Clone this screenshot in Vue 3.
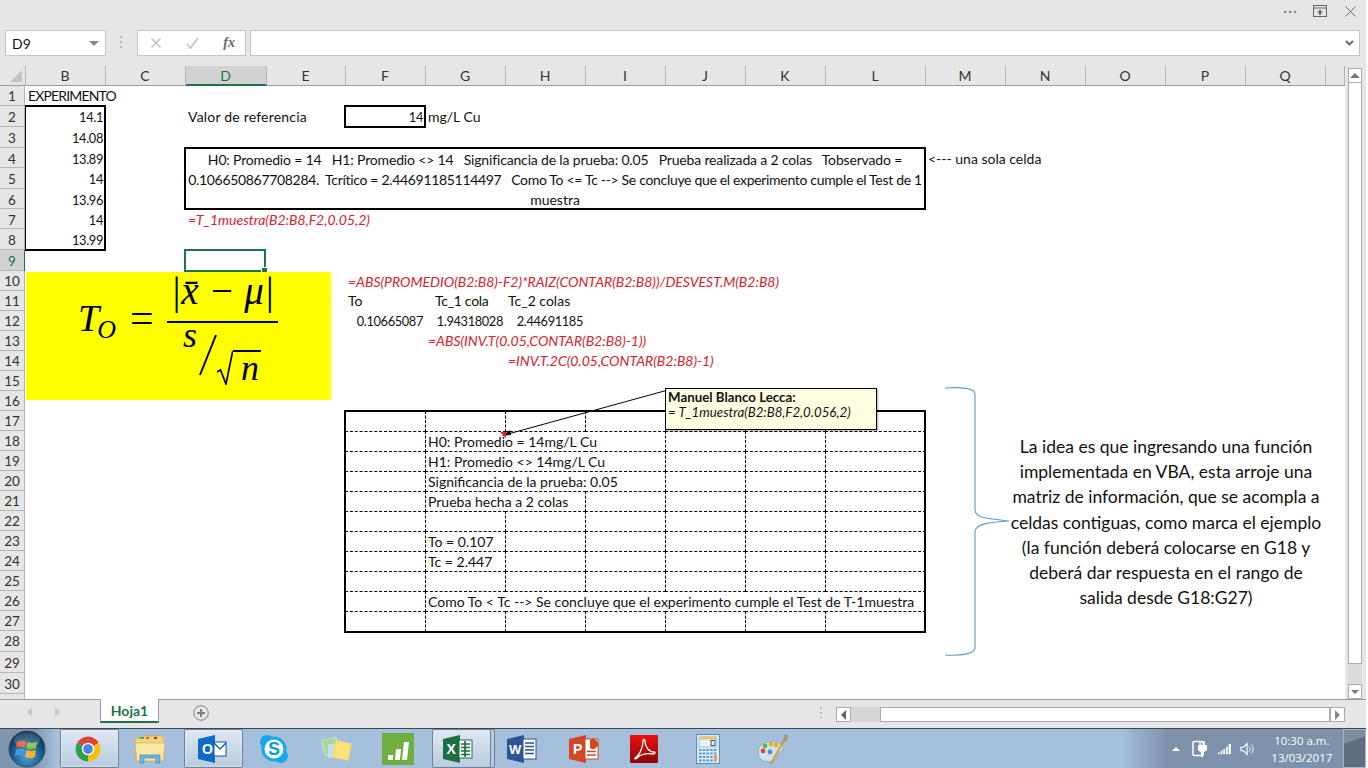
<script setup>
import { computed } from 'vue';

const colNames = 'BCDEFGHIJKLMNOPQR'.split('');
const colWidths = [80, 80, 81, 79, 80, 80, 80, 80, 80, 80, 100, 80, 80, 80, 80, 80, 20];
const rowHeights = [20, 21, 21, 20, 21, 20, 20, 21, 21, 20, 20, 20, 20, 20, 20, 20, 20, 20, 20, 20, 20, 20, 20, 20, 20, 20, 20, 21, 21, 21];

const gridCols = colWidths.map((w) => w + 'px').join(' ');
const gridRows = rowHeights.map((h) => h + 'px').join(' ');

// "B2" -> grid position, "B2:B8" -> grid area
const place = (ref) => {
    const [a, b] = ref.split(':');
    const c1 = colNames.indexOf(a[0]) + 1;
    const r1 = Number(a.slice(1));
    if (!b) return { gridColumn: c1, gridRow: r1 };
    const c2 = colNames.indexOf(b[0]) + 2;
    const r2 = Number(b.slice(1)) + 1;
    return { gridColumn: `${c1} / ${c2}`, gridRow: `${r1} / ${r2}` };
};

const rowOf = (ref) => Number(ref.slice(1));

const cells = [
    { at: 'B1', text: 'EXPERIMENTO', ls: -0.85 },
    { at: 'B2', text: '14.1', cls: 'num' },
    { at: 'B3', text: '14.08', cls: 'num' },
    { at: 'B4', text: '13.89', cls: 'num' },
    { at: 'B5', text: '14', cls: 'num' },
    { at: 'B6', text: '13.96', cls: 'num' },
    { at: 'B7', text: '14', cls: 'num' },
    { at: 'B8', text: '13.99', cls: 'num' },
    { at: 'D2', text: 'Valor de referencia', ls: 0.2 },
    { at: 'F2', text: '14', cls: 'num' },
    { at: 'G2', text: 'mg/L Cu' },
    { at: 'M4', text: '<--- una sola celda' },
    { at: 'D7', text: '=T_1muestra(B2:B8,F2,0.05,2)', cls: 'red' },
    { at: 'F10', text: '=ABS(PROMEDIO(B2:B8)-F2)*RAIZ(CONTAR(B2:B8))/DESVEST.M(B2:B8)', cls: 'red' },
    { at: 'F11', text: 'To' },
    { at: 'G11', text: 'Tc_1 cola', cls: 'indent', ls: -0.3 },
    { at: 'H11', text: 'Tc_2 colas' },
    { at: 'F12', text: '0.10665087', cls: 'num' },
    { at: 'G12', text: '1.94318028', cls: 'num' },
    { at: 'H12', text: '2.44691185', cls: 'num' },
    { at: 'G13', text: '=ABS(INV.T(0.05,CONTAR(B2:B8)-1))', cls: 'red' },
    { at: 'H14', text: '=INV.T.2C(0.05,CONTAR(B2:B8)-1)', cls: 'red' },
];

const tableText = {
    G18: 'H0: Promedio = 14mg/L Cu',
    G19: 'H1: Promedio <> 14mg/L Cu',
    G20: 'Significancia de la prueba: 0.05',
    G21: 'Prueba hecha a 2 colas',
    G23: 'To = 0.107',
    G24: 'Tc = 2.447',
    G26: 'Como To < Tc --> Se concluye que el experimento cumple el Test de T-1muestra',
};

// cells whose right dashed line is hidden because the text runs over it
const noRight = {
    18: 'GH',
    19: 'GH',
    20: 'GH',
    21: 'G',
    26: 'GHIJK',
};

const tableCells = computed(() => {
    const list = [];
    for (let r = 17; r <= 27; r++) {
        for (const c of 'FGHIJKL') {
            const hideRight = (noRight[r] || '').includes(c) || c === 'L';
            list.push({ at: c + r, text: tableText[c + r] || '', hideRight, hideBottom: r === 27 });
        }
    }
    return list;
});

const colHeaders = colNames.map((n, i) => ({ n: n === 'R' ? '' : n, w: colWidths[i] }));
const rowHeaders = rowHeights.map((h, i) => ({ n: i + 1, h, low: (i >= 1 && i <= 8) || i >= 28 }));

const mergedLines = [
    { text: 'H0: Promedio = 14   H1: Promedio <> 14   Significancia de la prueba: 0.05   Prueba realizada a 2 colas   Tobservado =', ls: -0.165 },
    { text: '0.106650867708284.  Tcrítico = 2.44691185114497   Como To <= Tc --> Se concluye que el experimento cumple el Test de 1', ls: -0.32 },
    { text: 'muestra', ls: 0 },
];

const noteLines = [
    'La idea es que ingresando una función',
    'implementada en VBA, esta arroje una',
    'matriz de información, que se acompla a',
    'celdas contiguas, como marca el ejemplo',
    '(la función deberá colocarse en G18 y',
    'deberá dar respuesta en el rango de',
    'salida desde G18:G27)',
];
</script>

<template>
    <div class="app">

        <div class="title-bar">
            <span class="dots">···</span>
            <svg class="ribbon-ico" width="14" height="12" viewBox="0 0 14 12">
                <rect x="0.5" y="0.5" width="13" height="11" fill="none" stroke="#666" />
                <line x1="0" y1="3" x2="14" y2="3" stroke="#666" />
                <path d="M7 4.5 L10 7.5 H8 V10 H6 V7.5 H4 Z" fill="#666" />
            </svg>
            <svg class="close-ico" width="11" height="11" viewBox="0 0 11 11">
                <path d="M0.5 0.5 L10.5 10.5 M10.5 0.5 L0.5 10.5" stroke="#666" fill="none" />
            </svg>
        </div>

        <div class="formula-bar">
            <div class="name-box">
                <span>D9</span>
                <i class="tri-down"></i>
            </div>
            <div class="grip"></div>
            <div class="fx-box">
                <svg width="12" height="12" viewBox="0 0 12 12">
                    <path d="M1.5 1.5 L10.5 10.5 M10.5 1.5 L1.5 10.5" stroke="#c4c4c4" stroke-width="1.6" fill="none" />
                </svg>
                <svg width="13" height="12" viewBox="0 0 13 12">
                    <path d="M1 7 L4.5 11 L12 1" stroke="#c4c4c4" stroke-width="1.8" fill="none" />
                </svg>
                <span class="fx">fx</span>
            </div>
            <div class="formula-input">
                <svg width="9" height="6" viewBox="0 0 9 6">
                    <path d="M1 1 L4.5 4.5 L8 1" stroke="#666" stroke-width="1.8" fill="none" />
                </svg>
            </div>
        </div>

        <div class="column-row">
            <div class="corner"><i></i></div>
            <div
                v-for="c in colHeaders"
                :key="c.n"
                class="col-head"
                :class="{ active: c.n === 'D' }"
                :style="{ width: c.w + 'px' }"
            >{{ c.n }}</div>
        </div>

        <div class="work">
            <div class="row-heads">
                <div
                    v-for="r in rowHeaders"
                    :key="r.n"
                    class="row-head"
                    :class="{ active: r.n === 9, low: r.low }"
                    :style="{ height: r.h + 'px' }"
                >{{ r.n }}</div>
            </div>

            <div class="sheet-wrap">
                <div class="sheet" :style="{ gridTemplateColumns: gridCols, gridTemplateRows: gridRows }">
                    <div
                        v-for="t in tableCells"
                        :key="t.at"
                        class="tcell"
                        :class="{ 'no-right': t.hideRight, 'no-bottom': t.hideBottom }"
                        :style="place(t.at)"
                    >{{ t.text }}</div>

                    <div
                        v-for="c in cells"
                        :key="c.at"
                        class="cell"
                        :class="[c.cls, { low: rowOf(c.at) >= 2 && rowOf(c.at) <= 10 }]"
                        :style="{ ...place(c.at), letterSpacing: c.ls ? c.ls + 'px' : null }"
                    >{{ c.text }}</div>

                    <div class="merged" :style="place('D4:L6')">
                        <div
                            v-for="(line, i) in mergedLines"
                            :key="i"
                            class="merged-line"
                            :style="{ letterSpacing: line.ls + 'px' }"
                        >{{ line.text }}</div>
                    </div>

                    <div class="box" :style="place('B2:B8')"></div>
                    <div class="box" :style="place('F2:F2')"></div>
                    <div class="box tbl" :style="place('F17:L27')"></div>
                    <div class="selection" :style="place('D9:D9')"><i></i></div>
                </div>

                <div class="picture">
                    <div class="eq-left">
                        <span class="big-t">T</span><span class="sub-o">O</span>
                    </div>
                    <div class="eq-sign">=</div>
                    <div class="frac">
                        <div class="frac-top">|x̄ − μ|</div>
                        <div class="frac-bottom">
                            <span class="frac-s">s</span>
                            <svg class="slash" width="18" height="42" viewBox="0 0 18 42">
                                <line x1="17" y1="1" x2="1" y2="41" stroke="#000" stroke-width="2" />
                            </svg>
                            <svg class="radical" width="16" height="34" viewBox="0 0 16 34">
                                <path d="M0 21 L3.5 19 L9 33 L15.5 1 L16 1" stroke="#000" stroke-width="1.7" fill="none" />
                            </svg>
                            <span class="frac-n">n</span>
                        </div>
                    </div>
                </div>

                <svg class="arrow" width="180" height="60" viewBox="0 0 180 60">
                    <line x1="168" y1="2" x2="8" y2="46" stroke="#000" />
                    <path d="M2 48 L10 42 L11 47 Z" fill="#000" />
                    <path d="M0 44 L6 44 L6 50 Z" fill="#e0202a" />
                </svg>

                <div class="comment">
                    <div class="comment-author">Manuel Blanco Lecca:</div>
                    <div class="comment-text">= T_1muestra(B2:B8,F2,0.056,2)</div>
                </div>

                <svg class="brace" width="68" height="272" viewBox="0 0 68 272">
                    <path
                        d="M2 2 C18 1 32 2 32 8 L32 124 C32 132 46 133 66 135 C46 136 32 138 32 146 L32 262 C32 268 18 270 2 269"
                        fill="none"
                        stroke="#5b9bd5"
                        stroke-width="1.1"
                    />
                </svg>

                <div class="note">
                    <div v-for="(line, i) in noteLines" :key="i">{{ line }}</div>
                </div>
            </div>

            <div class="v-scroll">
                <div class="sb-btn"><i class="tri-up"></i></div>
                <div class="v-thumb"></div>
                <div class="v-track"></div>
                <div class="sb-btn"><i class="tri-down small"></i></div>
            </div>
        </div>

        <div class="tab-bar">
            <div class="tab-nav">
                <i class="tri-left light"></i>
                <i class="tri-right light"></i>
            </div>
            <div class="tab">Hoja1</div>
            <svg class="add-sheet" width="16" height="16" viewBox="0 0 16 16">
                <circle cx="8" cy="8" r="7.3" fill="none" stroke="#808080" />
                <path d="M8 4 V12 M4 8 H12" stroke="#808080" stroke-width="2" />
            </svg>
            <div class="grip h-grip"></div>
            <div class="h-scroll">
                <div class="sb-btn h"><i class="tri-left"></i></div>
                <div class="h-track"></div>
                <div class="h-thumb"></div>
                <div class="sb-btn h"><i class="tri-right"></i></div>
            </div>
        </div>

        <div class="taskbar">
            <div class="orb-area">
                <svg width="38" height="38" viewBox="0 0 38 38">
                    <defs>
                        <radialGradient id="orbGlass" cx="50%" cy="70%" r="65%">
                            <stop offset="0" stop-color="#4ea6dc" />
                            <stop offset="0.7" stop-color="#17527f" />
                            <stop offset="1" stop-color="#0d2f4f" />
                        </radialGradient>
                    </defs>
                    <circle cx="19" cy="19" r="18" fill="url(#orbGlass)" stroke="#32506e" />
                    <path d="M9 12 C12 10 15 10 18 11.5 L17 18 C14 16.5 11 16.5 8 18 Z" fill="#e4552c" />
                    <path d="M19.5 12 C22 13.5 25 13.5 29 11.5 L28 18.5 C25 20 22 20 18.5 18.5 Z" fill="#86bb3f" />
                    <path d="M8 19.5 C11 18 14 18 17 19.5 L16 26 C13 24.5 10 24.5 7 26 Z" fill="#3d9ddc" />
                    <path d="M18.3 20 C22 21.5 25 21.5 27.8 20 L27 27 C24 28.5 21 28.5 17.2 27 Z" fill="#f5b52d" />
                    <ellipse cx="19" cy="10" rx="13" ry="7.5" fill="#fff" opacity="0.16" />
                </svg>
            </div>

            <div class="task on">
                <svg width="30" height="30" viewBox="0 0 48 48">
                    <path d="M24 24 L6.68 14 A20 20 0 0 1 41.32 14 Z" fill="#db4437" />
                    <path d="M24 24 L41.32 14 A20 20 0 0 1 24 44 Z" fill="#f4c20d" />
                    <path d="M24 24 L24 44 A20 20 0 0 1 6.68 14 Z" fill="#2f9e4f" />
                    <circle cx="24" cy="24" r="10" fill="#fff" />
                    <circle cx="24" cy="24" r="7.8" fill="#4a86e8" />
                </svg>
            </div>

            <div class="task">
                <svg width="32" height="30" viewBox="0 0 32 30">
                    <path d="M1 4 H8 L10 2 H28 L30 5 V27 H2 Z" fill="#f1d57a" stroke="#c7a95a" stroke-width="0.7" />
                    <rect x="6" y="3" width="4" height="2" fill="#4caf50" />
                    <rect x="12" y="3" width="3" height="2" fill="#c63" />
                    <rect x="20" y="3" width="3" height="2" fill="#a33" />
                    <path d="M1 9 H31 L29 27 H3 Z" fill="#fbe8a6" stroke="#cdb268" stroke-width="0.7" />
                    <path d="M6 29 V21 H26 V29 H22 V24 H10 V29 Z" fill="#6fb6e0" stroke="#3b86b8" stroke-width="0.7" />
                </svg>
            </div>

            <div class="task on">
                <svg width="30" height="30" viewBox="0 0 30 30">
                    <path d="M1 5 L18 1 V29 L1 25 Z" fill="#0a6cc4" />
                    <rect x="17" y="8" width="12" height="14" fill="#fff" stroke="#0a5ba8" />
                    <path d="M17 9 L23 15 L29 9" fill="none" stroke="#0a5ba8" stroke-width="1.3" />
                    <text x="5" y="20" class="ico-letter" font-size="14">O</text>
                </svg>
            </div>

            <div class="task skype">
                <svg width="30" height="30" viewBox="0 0 30 30">
                    <circle cx="8" cy="8" r="7" fill="#14a9e8" />
                    <circle cx="22" cy="22" r="7" fill="#14a9e8" />
                    <circle cx="15" cy="15" r="11" fill="#fff" stroke="#14a9e8" stroke-width="3" />
                    <text x="15" y="21" text-anchor="middle" class="ico-letter" font-size="18">S</text>
                </svg>
            </div>

            <div class="task">
                <svg width="32" height="28" viewBox="0 0 32 28">
                    <rect x="3" y="4" width="15" height="15" fill="#a7d89c" stroke="#c8e6c0" transform="rotate(-14 10 11)" />
                    <rect x="8" y="9" width="12" height="14" fill="#bfe0ee" />
                    <rect x="14" y="7" width="16" height="17" fill="#fbe375" stroke="#e9d680" transform="rotate(12 22 15)" />
                </svg>
            </div>

            <div class="task">
                <svg width="32" height="32" viewBox="0 0 32 32">
                    <rect width="32" height="32" fill="#6faf3f" />
                    <rect x="6" y="22" width="5" height="5" fill="#fff" />
                    <path d="M13 27 L14 16 H19 L18 27 Z" fill="#fff" />
                    <path d="M20 27 L22 9 H27 L25 27 Z" fill="#fff" />
                </svg>
            </div>

            <div class="task on stack">
                <svg width="30" height="30" viewBox="0 0 30 30">
                    <path d="M0 5 L17 1 V29 L0 25 Z" fill="#1d6f42" />
                    <rect x="16" y="6" width="13" height="18" fill="#fff" stroke="#1d6f42" />
                    <path d="M18 10 H27 M18 13.5 H27 M18 17 H27 M18 20.5 H27 M22 7 V23" stroke="#1d6f42" stroke-width="1.7" />
                    <text x="3.5" y="20" class="ico-letter" font-size="14">X</text>
                </svg>
            </div>

            <div class="task">
                <svg width="30" height="30" viewBox="0 0 30 30">
                    <path d="M0 5 L17 1 V29 L0 25 Z" fill="#2a5699" />
                    <rect x="16" y="5" width="13" height="20" fill="#fff" stroke="#2a5699" />
                    <path d="M18 9 H27 M18 12.5 H27 M18 16 H27 M18 19.5 H27" stroke="#2a5699" stroke-width="1.3" />
                    <text x="2" y="20" class="ico-letter" font-size="13">W</text>
                </svg>
            </div>

            <div class="task">
                <svg width="30" height="30" viewBox="0 0 30 30">
                    <path d="M0 5 L17 1 V29 L0 25 Z" fill="#d24726" />
                    <rect x="16" y="5" width="13" height="20" fill="#fff" stroke="#d24726" />
                    <path d="M21 6 A5 5 0 1 1 21 14 Z" fill="#d24726" />
                    <path d="M18 17.5 H27 M18 21 H27" stroke="#d24726" stroke-width="1.3" />
                    <text x="4" y="20" class="ico-letter" font-size="14">P</text>
                </svg>
            </div>

            <div class="task pdf">
                <svg width="28" height="28" viewBox="0 0 28 28">
                    <defs>
                        <linearGradient id="acroRed" x1="0" y1="0" x2="0" y2="1">
                            <stop offset="0" stop-color="#ee0f0f" />
                            <stop offset="1" stop-color="#8c0505" />
                        </linearGradient>
                    </defs>
                    <rect width="28" height="28" rx="1" fill="url(#acroRed)" />
                    <path d="M5 23 C9 21 13 13 13 6 C13 3.5 15 4 15 6 C15 12 19 17 24 17 C26 17 25 19 23 19 C17 18 11 19 7 23 C5.5 24.5 4 24 5 23 Z" fill="none" stroke="#fff" stroke-width="1.3" />
                </svg>
            </div>

            <div class="task">
                <svg width="24" height="30" viewBox="0 0 24 30">
                    <rect x="0.5" y="0.5" width="23" height="29" fill="#dbeaf5" stroke="#4f94c4" />
                    <rect x="3" y="2" width="18" height="3" fill="#f1c76b" />
                    <rect x="3" y="5" width="18" height="8" fill="#eaf3fa" stroke="#7aa7c7" stroke-width="0.6" />
                    <rect x="15" y="6.5" width="4" height="5" fill="none" stroke="#456" />
                    <path d="M3 16 H21 M3 19.5 H21 M3 23 H21 M3 26.5 H21" stroke="#5c9ccc" stroke-width="1.8" stroke-dasharray="2.5 1.2" />
                    <rect x="18" y="21" width="3" height="6" fill="#e4a03a" />
                </svg>
            </div>

            <div class="task paint">
                <svg width="32" height="32" viewBox="0 0 32 32">
                    <path d="M2 19 C2 10 13 7 21 9 C29 11 28 17 24 19 C20 21 22 24 19 27 C12 31 2 28 2 19 Z" fill="#cfe3ee" stroke="#7fa8c0" stroke-width="0.8" />
                    <circle cx="7" cy="18" r="2.4" fill="#d9483b" />
                    <circle cx="9" cy="13" r="2.4" fill="#6cb44b" />
                    <circle cx="15" cy="11" r="2.4" fill="#e0b02f" />
                    <circle cx="20" cy="12" r="2.4" fill="#e0b02f" />
                    <circle cx="14" cy="19" r="2.4" fill="#4f8fc9" />
                    <path d="M15 31 L29 5" stroke="#d89a3a" stroke-width="2" />
                    <path d="M27 8 L29 1 L32 3 L30 9 Z" fill="#b39268" />
                </svg>
            </div>

            <div class="tray">
                <i class="tray-up"></i>
                <svg width="18" height="20" viewBox="0 0 16 18">
                    <rect x="1" y="1.5" width="10" height="14" rx="1" fill="none" stroke="#fff" stroke-width="1.5" />
                    <path d="M6 5 H15 V10 L11 13 V17 H9 V13 L6 10 Z" fill="#fff" />
                    <path d="M8 1 V5 M12 1 V5" stroke="#fff" stroke-width="1.5" />
                </svg>
                <svg width="16" height="12" viewBox="0 0 16 12">
                    <path d="M1 10 H3 V12 H1 Z M4 8 H6 V12 H4 Z M7 6 H9 V12 H7 Z M10 3.5 H12 V12 H10 Z M13 0.5 H15.5 V12 H13 Z" fill="#fff" />
                </svg>
                <svg width="16" height="14" viewBox="0 0 16 14">
                    <path d="M1 5 H4 L8 1 V13 L4 9 H1 Z" fill="none" stroke="#fff" stroke-width="1.2" />
                    <path d="M10 4 C12 6 12 8 10 10 M12.5 2 C15.5 5 15.5 9 12.5 12" fill="none" stroke="#fff" />
                </svg>
                <div class="clock">
                    <div>10:30 a.m.</div>
                    <div>13/03/2017</div>
                </div>
                <div class="show-desktop"></div>
            </div>
        </div>

    </div>
</template>

<style>
html, body {
    margin: 0;
    background: #fff;
    overflow: hidden;
}
</style>

<style scoped>

.app {
    width: 1366px;
    height: 768px;
    display: flex;
    flex-direction: column;
    background: #e6e6e6;
    font-family: "Lato", "Liberation Sans", sans-serif;
    font-size: 14px;
    color: #111;
    overflow: hidden;
}




.title-bar {
    height: 30px;
    flex: none;
    box-sizing: border-box;
    padding: 3px 10px 0 0;
    display: flex;
    align-items: flex-start;
    justify-content: flex-end;
    gap: 18px;
}

.dots {
    margin-top: -2px;
    margin-right: -3px;
    font-size: 15px;
    letter-spacing: 1px;
    color: #777;
}

.ribbon-ico, .close-ico {
    margin-top: 2px;
}

.close-ico {
    margin-top: 3px;
}




.formula-bar {
    height: 26px;
    flex: none;
    padding-left: 5px;
    display: flex;
    gap: 4px;
}

.name-box {
    width: 101px;
    box-sizing: border-box;
    padding: 0 6px;
    background: #fff;
    border: 1px solid #c6c6c6;
    display: flex;
    align-items: center;
    justify-content: space-between;
    font-size: 14px;
}

.grip {
    width: 2px;
    margin: 6px 11px 6px 10px;
    background: repeating-linear-gradient(#b5b5b5 0 2px, transparent 2px 5px);
}

.fx-box {
    width: 109px;
    box-sizing: border-box;
    padding: 0 10px 0 12px;
    background: #fff;
    border: 1px solid #c6c6c6;
    display: flex;
    align-items: center;
    justify-content: space-between;
}

.fx {
    font-family: "Liberation Serif", serif;
    font-style: italic;
    font-weight: 700;
    font-size: 14px;
    color: #666;
}

.formula-input {
    flex: 1;
    margin-right: 6px;
    padding-right: 5px;
    background: #fff;
    border: 1px solid #c6c6c6;
    display: flex;
    align-items: center;
    justify-content: flex-end;
}




.column-row {
    height: 20px;
    flex: none;
    margin-top: 10px;
    display: flex;
}

.corner {
    width: 26px;
    flex: none;
    box-sizing: border-box;
    border-right: 1px solid #b5b5b5;
    border-bottom: 1px solid #9c9c9c;
    position: relative;
}

.corner i {
    position: absolute;
    right: 3px;
    bottom: 3px;
    width: 0;
    height: 0;
    border-left: 12px solid transparent;
    border-bottom: 12px solid #c3c3c3;
}

.col-head {
    flex: none;
    box-sizing: border-box;
    padding-right: 1px;
    border-right: 1px solid #b5b5b5;
    border-bottom: 1px solid #9c9c9c;
    text-align: center;
    line-height: 20px;
    font-size: 14px;
    color: #333;
}

.col-head:last-child {
    width: 19px !important;
}

.col-head.active {
    background: #d2d2d2;
    border-bottom: 2px solid #217346;
    color: #217346;
}




.work {
    height: 613px;
    flex: none;
    display: flex;
}

.row-heads {
    width: 25px;
    flex: none;
    box-sizing: border-box;
    border-right: 1px solid #b5b5b5;
}

.row-head {
    box-sizing: border-box;
    border-bottom: 1px solid #b5b5b5;
    text-align: center;
    padding-top: 1px;
    line-height: 18px;
    font-size: 13.5px;
    color: #333;
}

.row-head.low {
    padding-top: 2px;
}

.row-head.active {
    background: #d2d2d2;
    color: #217346;
    box-shadow: 1px 0 0 #217346;
}

.sheet-wrap {
    position: relative;
    width: 1320px;
    flex: none;
    background: #fff;
    overflow: hidden;
}

.sheet {
    display: grid;
}




.cell {
    min-width: 0;
    padding-left: 3px;
    white-space: pre;
    line-height: 20px;
    align-self: start;
}

.cell.low {
    padding-top: 1px;
}

.cell.num {
    padding-left: 0;
    padding-right: 2px;
    text-align: right;
    font-size: 12.8px;
    letter-spacing: -0.35px;
}

.cell.indent {
    padding-left: 10px;
}

.cell.red {
    color: #d8212b;
    font-style: italic;
}

.tcell {
    min-width: 0;
    box-sizing: border-box;
    margin: 0 -1px -1px 0;
    padding-left: 3px;
    white-space: pre;
    line-height: 21px;
    border-right: 1px dashed #000;
    border-bottom: 1px dashed #000;
}

.tcell.no-right {
    border-right: none;
}

.tcell.no-bottom {
    border-bottom: none;
}

.merged {
    margin: -1px;
    padding-top: 2px;
    box-sizing: border-box;
    border: 2px solid #000;
    display: flex;
    flex-direction: column;
    align-items: center;
    justify-content: center;
    background: #fff;
    z-index: 1;
}

.merged-line {
    line-height: 20px;
    white-space: pre;
}

.box {
    margin: -1px;
    border: 2px solid #000;
    pointer-events: none;
}

.box.tbl {
    margin-bottom: -2px;
}

.selection {
    margin: -1px 0 -1px -1px;
    border: 2px solid #217346;
    position: relative;
}

.selection i {
    position: absolute;
    right: -3px;
    bottom: -3px;
    width: 5px;
    height: 5px;
    background: #217346;
    border: 1px solid #fff;
    border-width: 1px 0 0 1px;
}




.picture {
    position: absolute;
    left: 1px;
    top: 186px;
    width: 305px;
    height: 128px;
    background: #ffff00;
    display: flex;
    align-items: flex-start;
    padding-left: 52px;
    box-sizing: border-box;
    font-family: "Liberation Serif", serif;
    font-style: italic;
    color: #000;
}

.eq-left {
    width: 52px;
    flex: none;
    margin-top: 27px;
    line-height: 38px;
    white-space: nowrap;
}

.big-t {
    font-size: 38px;
}

.sub-o {
    font-size: 26px;
    position: relative;
    top: 7px;
    left: -2px;
}

.eq-sign {
    width: 37px;
    flex: none;
    margin-top: 25px;
    line-height: 42px;
    font-style: normal;
    font-size: 42px;
}

.frac {
    width: 111px;
    flex: none;
}

.frac-top {
    height: 49px;
    text-align: center;
    font-size: 39px;
    line-height: 38px;
    border-bottom: 2px solid #000;
    white-space: nowrap;
}

.frac-bottom {
    height: 64px;
    padding-left: 16px;
    display: flex;
    align-items: flex-start;
    white-space: nowrap;
}

.frac-s {
    font-size: 36px;
    line-height: 24px;
    height: 24px;
}

.slash {
    margin: 11px 0 0 2px;
    flex: none;
}

.radical {
    margin-top: 28px;
    flex: none;
}

.frac-n {
    margin-top: 27px;
    font-size: 36px;
    line-height: 32px;
    padding: 0 2px 0 8px;
    border-top: 2px solid #000;
}




.arrow {
    position: absolute;
    left: 475px;
    top: 302px;
}

.comment {
    position: absolute;
    left: 640px;
    top: 302px;
    width: 212px;
    height: 42px;
    box-sizing: border-box;
    padding: 1px 2px;
    background: #ffffe1;
    border: 1px solid #000;
    box-shadow: 1px 1px 2px rgba(0,0,0,0.35);
    font-size: 13.3px;
    line-height: 15px;
}

.comment-author {
    font-weight: 700;
}

.comment-text {
    font-style: italic;
}

.brace {
    position: absolute;
    left: 918px;
    top: 300px;
}

.note {
    position: absolute;
    left: 985px;
    top: 348px;
    width: 312px;
    text-align: center;
    font-size: 17.5px;
    line-height: 25.2px;
    white-space: nowrap;
}




.v-scroll {
    flex: 1;
    padding: 2px 4px 0 3px;
    margin-top: -20px;
    display: flex;
    flex-direction: column;
}

.sb-btn {
    height: 15px;
    flex: none;
    box-sizing: border-box;
    background: #fff;
    border: 1px solid #ababab;
    display: flex;
    align-items: center;
    justify-content: center;
}

.v-thumb {
    height: 581px;
    flex: none;
    box-sizing: border-box;
    background: #fff;
    border: 1px solid #ababab;
    border-top: none;
}

.v-track {
    flex: 1;
    background: #dcdcdc;
}

.sb-btn.h {
    width: 15px;
    height: 15px;
}

.tri-down {
    width: 0;
    height: 0;
    border-left: 5px solid transparent;
    border-right: 5px solid transparent;
    border-top: 5px solid #888;
}

.tri-down.small {
    border-left-width: 4px;
    border-right-width: 4px;
    border-top: 4px solid #777;
}

.tri-up {
    width: 0;
    height: 0;
    border-left: 5px solid transparent;
    border-right: 5px solid transparent;
    border-bottom: 5px solid #777;
}

.tri-left {
    width: 0;
    height: 0;
    border-top: 5px solid transparent;
    border-bottom: 5px solid transparent;
    border-right: 5px solid #666;
}

.tri-right {
    width: 0;
    height: 0;
    border-top: 5px solid transparent;
    border-bottom: 5px solid transparent;
    border-left: 5px solid #888;
}

.tri-left.light {
    border-right-color: #c8c8c8;
}

.tri-right.light {
    border-left-color: #c8c8c8;
}




.tab-bar {
    height: 29px;
    flex: none;
    box-sizing: border-box;
    border-top: 1px solid #9a9a9a;
    display: flex;
    align-items: flex-start;
    position: relative;
}

.tab-nav {
    width: 100px;
    height: 24px;
    flex: none;
    box-sizing: border-box;
    padding: 0 40px 0 27px;
    display: flex;
    align-items: center;
    justify-content: space-between;
}

.tab {
    width: 59px;
    height: 24px;
    flex: none;
    box-sizing: border-box;
    background: #fff;
    border-left: 1px solid #9a9a9a;
    border-right: 1px solid #9a9a9a;
    border-bottom: 2px solid #217346;
    margin-top: -1px;
    text-align: center;
    line-height: 24px;
    font-weight: 700;
    font-size: 14px;
    color: #217346;
}

.add-sheet {
    flex: none;
    margin: 5px 0 0 34px;
}

.h-grip {
    margin: 7px 14px 0 611px;
    height: 11px;
    flex: none;
}

.h-scroll {
    width: 509px;
    height: 15px;
    margin-top: 7px;
    flex: none;
    display: flex;
}

.h-track {
    width: 29px;
    flex: none;
    background: #d6d6d6;
}

.h-thumb {
    flex: 1;
    box-sizing: border-box;
    background: #fff;
    border: 1px solid #ababab;
}




.taskbar {
    height: 40px;
    flex: none;
    box-sizing: border-box;
    border-top: 1px solid #39475a;
    background: #a6bfdb;
    display: flex;
    gap: 3px;
}

.orb-area {
    width: 57px;
    flex: none;
    box-sizing: border-box;
    display: flex;
    align-items: center;
    padding-left: 8px;
    background: linear-gradient(90deg, #7f95ad, #7f95ad 60%, #a6bfdb);
}

.task {
    width: 59px;
    flex: none;
    box-sizing: border-box;
    padding-right: 3px;
    border-radius: 2px;
    display: flex;
    align-items: center;
    justify-content: center;
}

.task.stack {
    padding-right: 7px;
}

.task.pdf {
    padding-right: 7px;
}

.task.paint {
    padding-right: 0;
}

.task.on {
    background: linear-gradient(180deg, #dfe8f2, #b9cbdf);
    border: 1px solid #6f8196;
    box-shadow: inset 0 0 2px #fff;
}

.task.stack {
    box-shadow: 4px 0 0 -1px #b9cbdf, 4px 0 0 0 #6f8196;
}

.ico-letter {
    font-family: "Liberation Sans", sans-serif;
    font-weight: 700;
    fill: #fff;
}

.task.skype .ico-letter {
    fill: #0f9ade;
}

.tray {
    width: 244px;
    margin-left: auto;
    flex: none;
    display: flex;
    align-items: center;
    box-sizing: border-box;
    padding-left: 50px;
    gap: 9px;
    background: linear-gradient(90deg, #a6bfdb, #7d91aa 45px);
}

.tray-up {
    width: 0;
    height: 0;
    margin-right: 3px;
    border-left: 4px solid transparent;
    border-right: 4px solid transparent;
    border-bottom: 4px solid #fff;
}

.clock {
    width: 72px;
    margin-left: 6px;
    font-family: "Open Sans", sans-serif;
    font-size: 11.5px;
    line-height: 17px;
    color: #fff;
    text-align: center;
}

.show-desktop {
    width: 23px;
    height: 100%;
    flex: none;
    margin-left: auto;
    box-sizing: border-box;
    border: 1px solid #a5b4c6;
    background: linear-gradient(160deg, #7f8d9e 0 30%, #5f6d80 32%);
}

</style>
